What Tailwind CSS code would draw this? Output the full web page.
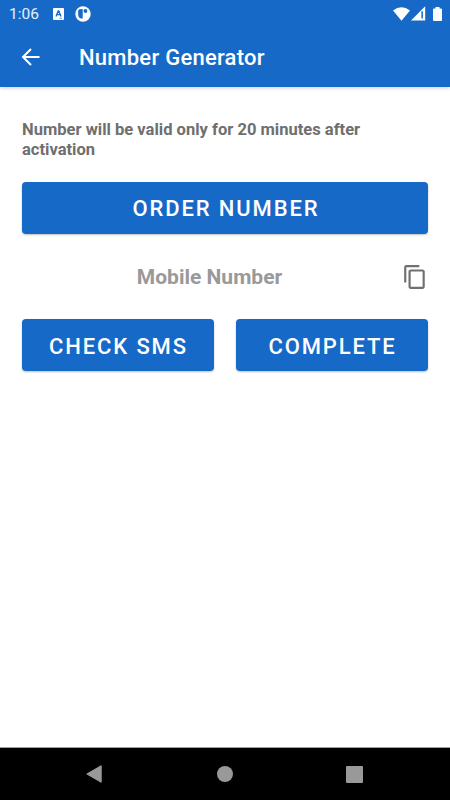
<!DOCTYPE html>
<html lang="en">
<head>
<meta charset="utf-8">
<title>Number Generator</title>
<script src="https://cdn.jsdelivr.net/npm/@tailwindcss/browser@4"></script>
</head>
<body class="bg-white font-['Roboto',sans-serif]">
<div class="flex h-[800px] w-[450px] flex-col overflow-hidden">
  <header class="h-[87px] shrink-0 bg-[#1669c7] text-white shadow-[0_1px_4px_rgba(0,0,0,0.2)]">
    <div class="flex h-[27px] items-center pl-[9px] pr-[8px]">
      <span class="w-[44px] pt-[2px] text-[15.500px] leading-[27px] text-white/90">1:06</span>
      <svg class="h-[12px] w-[11px]" viewBox="0 0 11 12"><rect width="11" height="12" rx="1" fill="#fff"/><path d="M3 8.5 5.2 3h.6L8 8.5M3.8 6.7h3.4" fill="none" stroke="#1669c7" stroke-width="1.3"/><path d="M6.5 10.2h2.6" stroke="#1669c7" stroke-width=".7"/></svg>
      <svg class="ml-[11px] h-[16px] w-[16px]" viewBox="0 0 16 16"><circle cx="8" cy="8" r="7.7" fill="#fff"/><path d="M3.200 4.200Q4.200 3 7.700 3.100V12.500H6Q3.200 11.500 3.200 8.500Z" fill="#1669c7"/><circle cx="10.400" cy="5" r="1.900" fill="#1669c7"/></svg>
      <svg class="ml-auto h-[14px] w-[17px]" viewBox="0 0 17 14"><path d="M0 3.4Q8.5-2.9 17 3.4L8.5 13.8Z" fill="#fff"/></svg>
      <svg class="ml-[1px] h-[15px] w-[15px]" viewBox="0 0 15 15"><path d="M0 14.5 14.2.3v14.2Z" fill="#fff"/><path d="M10.4 5.2h1.5v7.2h-1.5Z" fill="#1669c7"/></svg>
      <svg class="ml-[7px] h-[14px] w-[9px]" viewBox="0 0 9 14"><path d="M2.5 0h4v1.4H8q1 0 1 1V13q0 1-1 1H1q-1 0-1-1V2.400q0-1 1-1h1.500Z" fill="#fff"/></svg>
    </div>
    <div class="flex h-[60px] items-center pl-[19px]">
      <svg class="h-[24px] w-[24px]" viewBox="0 0 24 24"><path d="M20.500 12H4M12 4l-8 8 8 8" fill="none" stroke="#fff" stroke-width="2"/></svg>
      <h1 class="ml-[36px] whitespace-nowrap pt-[2px] text-[22px] font-medium leading-[30px] tracking-[0.250px]">Number Generator</h1>
    </div>
  </header>
  <main class="flex-1 px-[22px] pt-[33px]">
    <p class="whitespace-nowrap text-[16.550px] font-bold leading-[20px] text-[#6f6f6f]">Number will be valid only for 20 minutes after<br>activation</p>
    <button class="mt-[22px] block h-[52px] w-full rounded-[4px] bg-[#1669c7] pl-[2px] pt-[1px] text-center text-[22px] font-medium leading-[52px] tracking-[1.870px] text-white shadow-[0_1px_2px_rgba(0,0,0,0.25)]">ORDER NUMBER</button>
    <div class="mt-[28px] flex h-[30px] items-center">
      <span class="w-[375px] text-center text-[21px] font-bold leading-[30px] text-[#999]">Mobile Number</span>
      <svg class="ml-[5px] h-[26px] w-[26px] shrink-0" viewBox="0 0 24 24"><path d="M16 1H4c-1.100 0-2 .9-2 2v14h2V3h12V1zm3 4H8c-1.100 0-2 .9-2 2v14c0 1.100.9 2 2 2h11c1.100 0 2-.9 2-2V7c0-1.100-.9-2-2-2zm0 16H8V7h11v14z" fill="#707070"/></svg>
    </div>
    <div class="mt-[27px] grid grid-cols-2 gap-[22px]">
      <button class="h-[52px] rounded-[4px] bg-[#1669c7] pl-[1px] pt-[2px] text-center text-[22px] font-medium leading-[52px] tracking-[1.870px] text-white shadow-[0_1px_2px_rgba(0,0,0,0.25)]">CHECK SMS</button>
      <button class="h-[52px] rounded-[4px] bg-[#1669c7] pl-[1px] pt-[2px] text-center text-[22px] font-medium leading-[52px] tracking-[1.870px] text-white shadow-[0_1px_2px_rgba(0,0,0,0.25)]">COMPLETE</button>
    </div>
  </main>
  <nav class="flex h-[53px] shrink-0 items-center justify-between border-t border-[#a0a0a0] bg-black pl-[86px] pr-[87px]">
    <svg class="h-[18px] w-[17px]" viewBox="0 0 17 18"><path d="M.8 9 15.200.7v16.600Z" fill="#999" stroke="#999" stroke-width="1" stroke-linejoin="round"/></svg>
    <span class="h-[16px] w-[16px] rounded-full bg-[#999]"></span>
    <span class="h-[17px] w-[17px] rounded-[1px] bg-[#999]"></span>
  </nav>
</div>
</body>
</html>
